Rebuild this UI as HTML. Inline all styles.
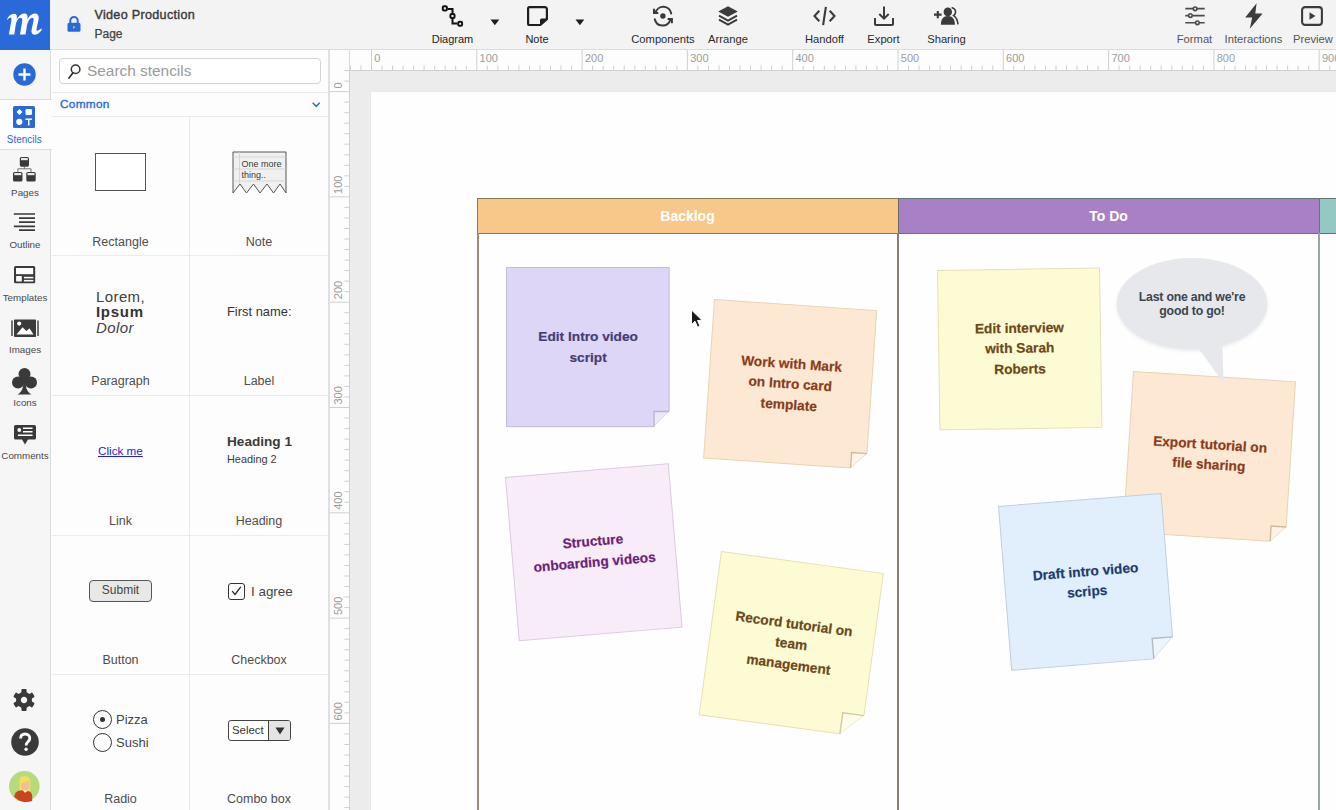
<!DOCTYPE html>
<html><head><meta charset="utf-8">
<style>
*{box-sizing:border-box}
html,body{margin:0;padding:0}
body{width:1336px;height:810px;overflow:hidden;position:relative;background:#fff;font-family:"Liberation Sans",sans-serif;color:#333}
.a{position:absolute}
.tl{position:absolute;font-size:11px;color:#2b2b2b;white-space:nowrap;top:32.5px;line-height:12px}
.ic{position:absolute;overflow:visible}
.rl{position:absolute;left:0;width:50px;text-align:center;font-size:9.8px;color:#4a4a4a;line-height:10px}
.cell{position:absolute;text-align:center;font-size:12.5px;color:#4d4d4d;line-height:14px;white-space:nowrap}
.note{position:absolute;transform-origin:50% 50%}
.note svg{position:absolute;left:0;top:0;overflow:visible}
.nt{position:absolute;left:0;top:0;width:100%;height:100%;display:flex;align-items:center;justify-content:center;text-align:center;font-weight:bold;font-size:13.7px;line-height:20px;-webkit-text-stroke:0.2px currentColor}
</style></head>
<body>
<!-- TOP BAR -->
<div class="a" style="left:0;top:0;width:1336px;height:50px;background:#f3f3f3;border-bottom:1px solid #dcdcdc"></div>
<div class="a" style="left:0;top:0;width:50px;height:50px;background:#2a69d8"></div>
<svg class="ic" style="left:0;top:0" width="50" height="50" viewBox="0 0 50 50">
<path fill="#fff" d="M7,19.5 C8.5,16 11,13.8 14,13.8 C16.5,13.8 17.3,15.5 16.8,18.5 L16.5,19.8 C18.5,15.8 21.3,13.5 24,13.5 C27,13.5 28,15.5 27.5,18.5 L27.3,19.6 C29.3,15.6 32,13.5 34.8,13.5 C38,13.5 39.2,16 38.6,19.5 L36.6,28.5 C36.2,30.5 36.8,31.2 38,30.5 C39.2,29.8 40.3,29 41.3,28.5 L41.8,29.8 C40,32.5 37.5,34.8 35,34.8 C32.3,34.8 31,33 31.6,30 L33.5,20.5 C33.9,18.5 33.3,17.8 32.2,17.8 C30,17.8 27.8,21.5 27,25.5 L25.5,34.5 H20 L22.3,20.5 C22.2,18.5 21.6,17.8 20.5,17.8 C18.3,17.8 16.3,21.3 15.6,25.5 L14.3,34.5 H8.9 L11.5,20 C11.8,18.5 11.2,17.5 10.3,17.5 C9.2,17.5 8.3,18.5 7.8,19.8 Z"/>
</svg>
<!-- lock -->
<svg class="ic" style="left:67px;top:16px" width="14" height="16" viewBox="0 0 14 16">
<path d="M3.3,7 V4.6 A3.7,3.7 0 0 1 10.7,4.6 V7" fill="none" stroke="#2a69d8" stroke-width="2"/>
<rect x="0.5" y="6.8" width="13" height="9" rx="1.6" fill="#2a69d8"/>
<path d="M6,9.8 L8.6,11.3 L6,12.8Z" fill="#8fd0a0"/>
</svg>
<div class="a" style="left:94.5px;top:8px;font-size:12.6px;letter-spacing:0.3px;color:#3a3a3a;line-height:14px;white-space:nowrap;-webkit-text-stroke:0.4px #3a3a3a">Video Production</div>
<div class="a" style="left:94.5px;top:26.5px;font-size:12px;color:#444;line-height:14px;white-space:nowrap;-webkit-text-stroke:0.25px #444">Page</div>

<!-- toolbar icons -->
<!-- Diagram -->
<svg class="ic" style="left:441px;top:5px" width="23" height="23" viewBox="0 0 23 23">
<g fill="none" stroke="#111" stroke-width="2">
<rect x="1.8" y="1.3" width="4.1" height="4.2" rx="1.3"/>
<rect x="9.4" y="9.1" width="4.2" height="3.9" rx="1.3"/>
<rect x="17.2" y="16.7" width="3.9" height="4" rx="1.3"/>
<path d="M6.9,3.9 H11.5 V8.1 M11.5,14 V18.6 H16.2"/>
</g></svg>
<svg class="ic" style="left:490px;top:19px" width="10" height="7" viewBox="0 0 10 7"><path d="M0.5,0.5 H9.3 L4.9,6.3Z" fill="#1e1e1e"/></svg>
<div class="tl" style="left:431px;width:43px;text-align:center;color:#222">Diagram</div>
<!-- Note -->
<svg class="ic" style="left:527px;top:6px" width="21" height="20" viewBox="0 0 21 20">
<path d="M2.2,1.1 H18 A1.9,1.9 0 0 1 19.9,3 V13.2 L13.3,19 H2.2 A1.1,1.1 0 0 1 1.1,17.9 V2.2 A1.1,1.1 0 0 1 2.2,1.1Z" fill="none" stroke="#1e1e1e" stroke-width="2.2" stroke-linejoin="round"/>
<path d="M19.9,12.5 H14.5 A1.5,1.5 0 0 0 13,14 V19.2Z" fill="#1e1e1e"/>
</svg>
<svg class="ic" style="left:575px;top:19px" width="10" height="7" viewBox="0 0 10 7"><path d="M0.5,0.5 H9.3 L4.9,6.3Z" fill="#1e1e1e"/></svg>
<div class="tl" style="left:520px;width:34px;text-align:center;color:#222">Note</div>
<!-- Components -->
<svg class="ic" style="left:653px;top:6px" width="21" height="21" viewBox="0 0 21 21">
<g fill="none" stroke="#3a3a3a" stroke-width="2" stroke-linecap="round">
<path d="M2.6,6.6 A8,8 0 0 1 18.2,7.5"/>
<path d="M1.8,13.2 A8,8 0 0 0 17.2,14.2"/>
<path d="M1,2.8 V7.1 H5.3" stroke-linecap="butt" stroke-linejoin="miter"/>
<path d="M14.6,13 H18.9 V17.2" stroke-linecap="butt" stroke-linejoin="miter"/>
</g>
<circle cx="9.9" cy="10" r="2.7" fill="#3a3a3a"/>
</svg>
<div class="tl" style="left:631px;width:64px;text-align:center;font-size:11.2px">Components</div>
<!-- Arrange -->
<svg class="ic" style="left:718px;top:6px" width="20" height="20" viewBox="0 0 20 20">
<path d="M10,0.3 L19.8,5.5 L10,10.8 L0.2,5.5Z" fill="#3c3c3c"/>
<path d="M1,9.6 L10,14.6 L19,9.6 M1,13.6 L10,18.6 L19,13.6" fill="none" stroke="#3c3c3c" stroke-width="2"/>
</svg>
<div class="tl" style="left:707px;width:42px;text-align:center;font-size:11.2px">Arrange</div>
<!-- Handoff -->
<svg class="ic" style="left:813px;top:6px" width="23" height="20" viewBox="0 0 23 20">
<g fill="none" stroke="#3c3c3c" stroke-width="2.1">
<path d="M6.3,4.8 L1.5,10 L6.3,15.2 M16.7,4.8 L21.5,10 L16.7,15.2 M12.9,0.8 L10.1,19.2"/>
</g></svg>
<div class="tl" style="left:804px;width:41px;text-align:center;font-size:11.2px">Handoff</div>
<!-- Export -->
<svg class="ic" style="left:874px;top:6px" width="20" height="20" viewBox="0 0 20 20">
<g fill="none" stroke="#3c3c3c" stroke-width="2">
<path d="M10,0.5 V12.5 M5.3,8 L10,12.6 L14.7,8"/>
<path d="M1,12 V18.2 A0.8,0.8 0 0 0 1.8,19 H18.2 A0.8,0.8 0 0 0 19,18.2 V12"/>
</g></svg>
<div class="tl" style="left:867px;width:33px;text-align:center;font-size:11.2px">Export</div>
<!-- Sharing -->
<svg class="ic" style="left:934px;top:7px" width="25" height="19" viewBox="0 0 25 19">
<path d="M0,7.6 H7.6 M3.8,4.1 V11.3" stroke="#3a3a3a" stroke-width="2.1" fill="none"/>
<ellipse cx="13.8" cy="4.9" rx="4.2" ry="4.3" fill="#3a3a3a"/>
<path d="M6.9,17.8 C6.9,12.3 9.3,9 13.9,9 C18.5,9 20.9,12.3 20.9,17.8 Z" fill="#3a3a3a"/>
<path d="M17.6,0.6 C20.3,1.4 21.8,3.4 21.5,5.6 C21.3,7 20.6,7.9 19.6,8.6 C22.2,10.2 23.6,13.6 24,17.4" stroke="#3a3a3a" stroke-width="1.6" fill="none"/>
</svg>
<div class="tl" style="left:927px;width:39px;text-align:center;font-size:11.2px">Sharing</div>
<!-- Format -->
<svg class="ic" style="left:1185px;top:7px" width="20" height="18" viewBox="0 0 20 18">
<g stroke="#4a4a4a" stroke-width="1.6" fill="none">
<path d="M0.3,1.6 H8.2 M12,1.6 H19.7 M0.3,8.6 H3.5 M7.3,8.6 H19.7 M0.3,15.8 H10.5 M14.3,15.8 H19.7"/>
<circle cx="10.1" cy="1.8" r="1.8"/>
<circle cx="5.4" cy="8.6" r="1.8"/>
<circle cx="12.4" cy="15.8" r="1.8"/>
</g></svg>
<div class="tl" style="left:1176px;width:37px;text-align:center;font-size:11.2px;color:#555">Format</div>
<!-- Interactions -->
<svg class="ic" style="left:1245px;top:3px" width="18" height="26" viewBox="0 0 18 26">
<path d="M11.6,0.3 L0.2,14.5 L7.2,14.5 L4.8,25.8 L17.6,10.6 L10.3,10.6 Z" fill="#3c3c3c"/>
</svg>
<div class="tl" style="left:1223px;width:61px;text-align:center;font-size:11.2px;color:#555">Interactions</div>
<!-- Preview -->
<svg class="ic" style="left:1301px;top:6px" width="22" height="20" viewBox="0 0 22 20">
<rect x="1.1" y="1.1" width="19.8" height="17.8" rx="3" fill="none" stroke="#3c3c3c" stroke-width="2.1"/>
<path d="M8.5,6.2 L14.5,10 L8.5,13.8Z" fill="#3c3c3c"/>
</svg>
<div class="tl" style="left:1292px;width:42px;text-align:center;font-size:11.2px;color:#555">Preview</div>
<!-- LEFT RAIL -->
<div class="a" style="left:0;top:50px;width:51px;height:760px;background:#f6f6f6;border-right:1px solid #d9d9d9"></div>
<div class="a" style="left:0;top:99px;width:52px;height:51px;background:#fdfdfd;border-top:1px solid #dddddd;border-bottom:1px solid #dddddd"></div>
<svg class="ic" style="left:13px;top:63px" width="23" height="23" viewBox="0 0 23 23">
<circle cx="11.5" cy="11.5" r="11.2" fill="#2a69d8"/>
<path d="M11.5,5.5 V17.5 M5.5,11.5 H17.5" stroke="#fff" stroke-width="2.4"/>
</svg>
<!-- stencils icon -->
<svg class="ic" style="left:13px;top:105.5px" width="22" height="22" viewBox="0 0 22 22">
<rect x="0" y="0" width="22" height="22" rx="1.5" fill="#2a69d8"/>
<path d="M6.5,3 L9.5,6 L6.5,9 L3.5,6Z" fill="#fff"/>
<rect x="12.5" y="3" width="6.5" height="6" rx="1.3" fill="#fff"/>
<circle cx="6.3" cy="15.8" r="3.1" fill="#fff"/>
<path d="M12.5,12.5 H19 V14 H16.5 V19.5 H15 V14 H12.5Z" fill="#fff"/>
</svg>
<div class="rl" style="top:135px;left:-0.7px;color:#2a69d8;font-size:10px">Stencils</div>
<!-- pages icon -->
<svg class="ic" style="left:13px;top:157px" width="23" height="25" viewBox="0 0 23 25">
<g fill="#3a3a3a">
<rect x="6.8" y="0" width="9.2" height="9.7" rx="1.6"/>
<rect x="0" y="15" width="9.5" height="9.6" rx="1.6"/>
<rect x="13.3" y="15" width="9.4" height="9.6" rx="1.6"/>
</g>
<g fill="#e8e8e8"><rect x="8" y="1" width="6.8" height="2.2"/><rect x="1.2" y="16" width="7.1" height="2.2"/><rect x="14.5" y="16" width="7" height="2.2"/></g>
<path d="M11.4,9.7 V11.8 M4.9,15 V11.8 H18 V15" fill="none" stroke="#666" stroke-width="0.9"/>
</svg>
<div class="rl" style="top:188px">Pages</div>
<!-- outline icon -->
<svg class="ic" style="left:13px;top:212px" width="23" height="20" viewBox="0 0 23 20">
<g stroke="#3a3a3a" stroke-width="1.7">
<path d="M0.8,2 H22 M6,6.1 H22 M6,10.1 H22 M0.8,14.3 H22 M6,18.2 H22"/>
</g></svg>
<div class="rl" style="top:240px">Outline</div>
<!-- templates icon -->
<svg class="ic" style="left:13.8px;top:266.4px" width="21.2" height="17.3" viewBox="0 0 21.2 17.3">
<rect x="0" y="0" width="21.2" height="17.3" rx="1.5" fill="#3a3a3a"/>
<rect x="2" y="2" width="17.2" height="6.2" fill="#fafafa"/>
<rect x="2.1" y="10" width="5.7" height="5.6" rx="0.6" fill="#fafafa"/>
<rect x="9.9" y="10.8" width="9.5" height="1.6" fill="#fafafa"/>
<rect x="9.9" y="13.9" width="9.5" height="1.6" fill="#fafafa"/>
</svg>
<div class="rl" style="top:293px">Templates</div>
<!-- images icon -->
<svg class="ic" style="left:11px;top:319px" width="28" height="19" viewBox="0 0 28 19">
<path d="M1,1.5 V17 M27,1.5 V17" stroke="#3a3a3a" stroke-width="1.4"/>
<rect x="3" y="0.5" width="22" height="17.5" rx="0.8" fill="#3a3a3a"/>
<path d="M5.5,15.5 L11.5,8.2 L15.5,12 L18.5,9.2 L22.5,15.5Z" fill="#fff"/>
<circle cx="8.2" cy="4.6" r="2.1" fill="#fff"/>
</svg>
<div class="rl" style="top:345px">Images</div>
<!-- icons (club) -->
<svg class="ic" style="left:11.5px;top:367.5px" width="25" height="27" viewBox="0 0 25 27">
<g fill="#3a3a3a">
<circle cx="12.5" cy="6" r="6"/>
<circle cx="6" cy="14.5" r="6"/>
<circle cx="19" cy="14.5" r="6"/>
<path d="M10.5,8 H14.5 L13.8,17 C14.3,22 16.5,25 19.5,26.5 H5.5 C8.5,25 10.7,22 11.2,17Z"/>
</g></svg>
<div class="rl" style="top:398px">Icons</div>
<!-- comments icon -->
<svg class="ic" style="left:13.5px;top:425px" width="22" height="20" viewBox="0 0 22 20">
<path d="M1.5,0 H20.5 A1.5,1.5 0 0 1 22,1.5 V13 A1.5,1.5 0 0 1 20.5,14.5 H14 L11,19.5 L8,14.5 H1.5 A1.5,1.5 0 0 1 0,13 V1.5 A1.5,1.5 0 0 1 1.5,0Z" fill="#3a3a3a"/>
<circle cx="5.3" cy="5" r="1.9" fill="#fff"/>
<path d="M9,3.3 H18.5 M9,6.8 H18.5 M4,10.3 H18.5" stroke="#fff" stroke-width="1.5"/>
</svg>
<div class="rl" style="top:451px">Comments</div>
<!-- gear -->
<svg class="ic" style="left:13.3px;top:688.8px" width="22" height="22" viewBox="-11 -11 22 22">
<g fill="#3a3a3a"><rect x="-2.6" y="-10.9" width="5.2" height="5" rx="0.8" transform="rotate(0)"/><rect x="-2.6" y="-10.9" width="5.2" height="5" rx="0.8" transform="rotate(60)"/><rect x="-2.6" y="-10.9" width="5.2" height="5" rx="0.8" transform="rotate(120)"/><rect x="-2.6" y="-10.9" width="5.2" height="5" rx="0.8" transform="rotate(180)"/><rect x="-2.6" y="-10.9" width="5.2" height="5" rx="0.8" transform="rotate(240)"/><rect x="-2.6" y="-10.9" width="5.2" height="5" rx="0.8" transform="rotate(300)"/></g>
<circle r="5.6" fill="none" stroke="#3a3a3a" stroke-width="4.8"/>
</svg>
<!-- help -->
<svg class="ic" style="left:10.5px;top:728px" width="28" height="28" viewBox="0 0 28 28">
<circle cx="14" cy="14" r="13.8" fill="#3a3a3a"/>
<path d="M9.6,10.6 C9.6,7.6 11.6,6 14.2,6 C17,6 18.8,7.8 18.8,10.2 C18.8,13.6 15.2,13.8 15.2,17 V17.6" fill="none" stroke="#fff" stroke-width="2.8"/>
<circle cx="15.1" cy="21.3" r="1.7" fill="#fff"/>
</svg>
<!-- avatar -->
<svg class="ic" style="left:8.9px;top:770.5px" width="31" height="31" viewBox="0 0 31 31">
<circle cx="15.3" cy="15.3" r="15.3" fill="#b5db7c"/>
<path d="M10.5,10 C10.5,6.5 12.5,5.3 15.8,5.3 C19.5,5.3 21.2,7.5 21.2,11 L21.2,23 L10.3,23Z" fill="#f5df55"/>
<path d="M12,12.5 C13.5,12 17,10.8 19.8,9.5 C20.3,11 20.3,13 20.2,15.5 C20,18 18.5,19.5 16.3,19.5 C13.8,19.5 12.1,17.8 12,15Z" fill="#f1bf94"/>
<path d="M6.5,22 C8,20 11,19.3 14,19.3 L16,21.5 L19,20 C21.5,20.5 23,22 23.2,25 L23.2,30 C20.5,31 17.5,31.3 15,31 C11,30.5 7.5,28.5 5,25.5Z" fill="#c9441f"/>
<path d="M13.8,19.3 L16,21.8 L17.5,20.2 L17,19.5Z" fill="#fff"/>
</svg>
<!-- STENCIL PANEL -->
<div class="a" style="left:52px;top:50px;width:276px;height:760px;background:#fdfdfd"></div>
<div class="a" style="left:328px;top:50px;width:2px;height:760px;background:#e0e0e0"></div>
<div class="a" style="left:59px;top:58px;width:262px;height:26px;border:1px solid #d4d4d4;border-radius:4px;background:#fff"></div>
<svg class="ic" style="left:68px;top:63.5px" width="13" height="15" viewBox="0 0 13 15">
<circle cx="7.6" cy="5.3" r="4.3" fill="none" stroke="#333" stroke-width="1.5"/>
<path d="M5,8.8 L1,14" stroke="#333" stroke-width="1.8" stroke-linecap="round"/>
</svg>
<div class="a" style="left:87px;top:62px;font-size:15.4px;line-height:18px;color:#9a9a9a;white-space:nowrap">Search stencils</div>
<div class="a" style="left:52px;top:92px;width:276px;height:1px;background:#ebebeb"></div>
<div class="a" style="left:60px;top:97px;font-size:11.8px;letter-spacing:0.3px;line-height:14px;color:#2a69d8;white-space:nowrap;-webkit-text-stroke:0.35px #2a69d8">Common</div>
<svg class="ic" style="left:312px;top:102px" width="9" height="6" viewBox="0 0 9 6"><path d="M0.7,0.7 L4.2,4.3 L7.7,0.7" fill="none" stroke="#2a69d8" stroke-width="1.5"/></svg>
<div class="a" style="left:52px;top:116px;width:276px;height:1px;background:#ebebeb"></div>
<!-- grid lines -->
<div class="a" style="left:189px;top:116px;width:1px;height:694px;background:#ebebef"></div>
<div class="a" style="left:52px;top:255px;width:276px;height:1px;background:#ebebef"></div>
<div class="a" style="left:52px;top:394.5px;width:276px;height:1px;background:#ebebef"></div>
<div class="a" style="left:52px;top:534.5px;width:276px;height:1px;background:#ebebef"></div>
<div class="a" style="left:52px;top:674px;width:276px;height:1px;background:#ebebef"></div>
<!-- row1 -->
<div class="a" style="left:95px;top:153px;width:51px;height:38px;border:1.6px solid #555;background:#fff"></div>
<div class="cell" style="left:52px;width:137px;top:234.5px">Rectangle</div>
<svg class="ic" style="left:232px;top:150.5px" width="55" height="44" viewBox="0 0 55 44">
<path d="M1,1 H54 V42 L48,33 L41.5,42 L35,33 L28,42 L21.5,33 L14.5,42 L8,33 L1,42Z" fill="#f0f0f0" stroke="#555" stroke-width="1"/>
<path d="M1,6 H54 M1,18 H54 M1,30 H54 M7.5,1 V33" stroke="#cfcfcf" stroke-width="0.8" fill="none"/>
<text x="9.5" y="16" font-family="Liberation Sans" font-size="9" fill="#3a3a3a">One more</text>
<text x="9.5" y="26.5" font-family="Liberation Sans" font-size="9" fill="#3a3a3a">thing..</text>
</svg>
<div class="cell" style="left:190px;width:138px;top:234.5px">Note</div>
<!-- row2 -->
<div class="a" style="left:96px;top:289px;font-size:15px;line-height:15.4px;color:#404040;white-space:nowrap;letter-spacing:0.4px">Lorem,<br><b style="letter-spacing:0.7px;color:#333">Ipsum</b><br><i>Dolor</i></div>
<div class="cell" style="left:52px;width:137px;top:373.8px">Paragraph</div>
<div class="a" style="left:227px;top:304px;font-size:12.9px;line-height:16px;color:#333;white-space:nowrap">First name:</div>
<div class="cell" style="left:190px;width:138px;top:373.8px">Label</div>
<!-- row3 -->
<div class="a" style="left:98px;top:444px;font-size:11.7px;line-height:14px;color:#2222dd;white-space:nowrap;text-decoration:underline">Click me</div>
<div class="cell" style="left:52px;width:137px;top:513.5px">Link</div>
<div class="a" style="left:227px;top:434px;font-size:13.6px;font-weight:bold;line-height:16px;color:#3a3a3a;white-space:nowrap">Heading 1</div>
<div class="a" style="left:227px;top:453px;font-size:10.9px;line-height:13px;color:#3a3a3a;white-space:nowrap">Heading 2</div>
<div class="cell" style="left:190px;width:138px;top:513.5px">Heading</div>
<!-- row4 -->
<div class="a" style="left:89px;top:580px;width:63px;height:22px;border:1.4px solid #555;border-radius:4px;background:#e8e8e8;font-size:12px;line-height:19px;text-align:center;color:#444">Submit</div>
<div class="cell" style="left:52px;width:137px;top:652.8px">Button</div>
<div class="a" style="left:228px;top:582.5px;width:17px;height:17px;border:1.4px solid #333;border-radius:3px;background:#fff"></div>
<svg class="ic" style="left:230px;top:585px" width="13" height="12" viewBox="0 0 13 12"><path d="M2.2,6.2 L5,9.5 L10.8,1.8" fill="none" stroke="#222" stroke-width="1.3"/></svg>
<div class="a" style="left:251px;top:584px;font-size:13.4px;line-height:16px;color:#444;white-space:nowrap">I agree</div>
<div class="cell" style="left:190px;width:138px;top:652.8px">Checkbox</div>
<!-- row5 -->
<div class="a" style="left:92.5px;top:709.5px;width:19px;height:19px;border:1.4px solid #333;border-radius:50%;background:#fff"></div>
<div class="a" style="left:99.5px;top:716.5px;width:5px;height:5px;border-radius:50%;background:#333"></div>
<div class="a" style="left:92.5px;top:733px;width:19px;height:19px;border:1.4px solid #333;border-radius:50%;background:#fff"></div>
<div class="a" style="left:116px;top:711.5px;font-size:13px;line-height:16px;color:#444;white-space:nowrap">Pizza</div>
<div class="a" style="left:116px;top:735px;font-size:13px;line-height:16px;color:#444;white-space:nowrap">Sushi</div>
<div class="cell" style="left:52px;width:137px;top:791.8px">Radio</div>
<div class="a" style="left:228px;top:720px;width:63px;height:21px;border:1.3px solid #444;border-radius:3px;background:#fff"></div>
<div class="a" style="left:268px;top:721px;width:22px;height:19px;background:#e4e4e4;border-left:1.3px solid #444;border-radius:0 2px 2px 0"></div>
<svg class="ic" style="left:274.5px;top:726.5px" width="10" height="8" viewBox="0 0 10 8"><path d="M0.5,0.5 H9.5 L5,7.5Z" fill="#333"/></svg>
<div class="a" style="left:232px;top:723px;font-size:11.4px;line-height:14px;color:#333;white-space:nowrap">Select</div>
<div class="cell" style="left:190px;width:138px;top:791.8px">Combo box</div>
<!-- CANVAS -->
<div class="a" style="left:350px;top:71px;width:986px;height:739px;background:#ececec"></div>
<div class="a" style="left:371px;top:91.5px;width:965px;height:718.5px;background:#fefefe;box-shadow:0 0 1px #d8d8d8"></div>
<div class="a" style="left:477px;top:197.5px;width:421px;height:36px;background:#f7c889;border:1.5px solid #8b7856;border-right:none"></div>
<div class="a" style="left:898px;top:197.5px;width:421px;height:36px;background:#a880c6;border:1.5px solid #5f7777;border-left:1.5px solid #6b6b5a;border-right:none"></div>
<div class="a" style="left:1319px;top:197.5px;width:17px;height:36px;background:#93c8c3;border:1.5px solid #5f7777;border-right:none"></div>
<div class="a" style="left:477px;top:233px;width:1.5px;height:577px;background:#9a8c78"></div>
<div class="a" style="left:897.3px;top:233px;width:1.5px;height:577px;background:#8d7f6d"></div>
<div class="a" style="left:1318.3px;top:233px;width:1.5px;height:577px;background:#93a8a8"></div>
<div class="a" style="left:477px;top:197.5px;width:421px;height:36px;line-height:37px;text-align:center;color:#fff;font-weight:bold;font-size:14px">Backlog</div>
<div class="a" style="left:898px;top:197.5px;width:421px;height:36px;line-height:37px;text-align:center;color:#fff;font-weight:bold;font-size:14px">To Do</div>
<div class="note" style="left:506.3px;top:267.2px;width:163.7px;height:160.2px;transform-origin:0 0;transform:rotate(0deg)"><svg width="163.7" height="160.2" viewBox="0 0 163.7 160.2"><path d="M0.5,0.5 H163.2 V143.89999999999998 L147.39999999999998,159.7 H0.5Z" fill="#ddd6f6" stroke="#c3bcd8" stroke-width="1"/><path d="M147.39999999999998,143.89999999999998 H163.2 L147.39999999999998,159.7Z" fill="#ece8f8"/><path d="M147.99999999999997,159.7 V144.49999999999997 H163.2" stroke="#b9b5c6" stroke-width="1.4" fill="none"/></svg><div class="nt" style="color:#463c74;line-height:20.5px;font-size:13.7px;letter-spacing:0px;top:0.5px"><div>Edit Intro video<br>script</div></div></div>
<div class="note" style="left:713.9px;top:298.6px;width:163.6px;height:159.8px;transform-origin:0 0;transform:rotate(3.9deg)"><svg width="163.6" height="159.8" viewBox="0 0 163.6 159.8"><path d="M0.5,0.5 H163.1 V143.3 L147.1,159.3 H0.5Z" fill="#fde9d3" stroke="#e8d2b8" stroke-width="1"/><path d="M147.1,143.3 H163.1 L147.1,159.3Z" fill="#fcf4ea"/><path d="M147.7,159.3 V143.9 H163.1" stroke="#cdbb9c" stroke-width="1.4" fill="none"/></svg><div class="nt" style="color:#8a3b1c;line-height:20.5px;font-size:13.7px;letter-spacing:0px;top:0.5px"><div>Work with Mark<br>on Intro card<br>template</div></div></div>
<div class="note" style="left:505.0px;top:477.2px;width:164.3px;height:164.9px;transform-origin:0 0;transform:rotate(-4.8deg)"><svg width="164.3" height="164.9" viewBox="0 0 164.3 164.9"><rect x="0.5" y="0.5" width="163.3" height="163.9" fill="#f9ecf9" stroke="#dcc8e0" stroke-width="1"/></svg><div class="nt" style="color:#6c2178;line-height:20.5px;font-size:13.7px;letter-spacing:0px;top:0.5px"><div>Structure<br>onboarding videos</div></div></div>
<div class="note" style="left:720.9px;top:551.1px;width:164.4px;height:165.7px;transform-origin:0 0;transform:rotate(7.76deg)"><svg width="164.4" height="165.7" viewBox="0 0 164.4 165.7"><path d="M0.5,0.5 H163.9 V143.2 L141.9,165.2 H0.5Z" fill="#fdfbd3" stroke="#e6e0b4" stroke-width="1"/><path d="M141.9,143.2 H163.9 L141.9,165.2Z" fill="#fdfce8"/><path d="M142.5,165.2 V143.79999999999998 H163.9" stroke="#d0c9a2" stroke-width="1.4" fill="none"/></svg><div class="nt" style="color:#6b4819;line-height:20.5px;font-size:13.7px;letter-spacing:0px;top:0.5px"><div>Record tutorial on<br>team<br>management</div></div></div>
<div class="note" style="left:936.8px;top:269.8px;width:163px;height:160.4px;transform-origin:0 0;transform:rotate(-0.88deg)"><svg width="163" height="160.4" viewBox="0 0 163 160.4"><rect x="0.5" y="0.5" width="162" height="159.4" fill="#fdfbd3" stroke="#e6e0b4" stroke-width="1"/></svg><div class="nt" style="color:#6b4819;line-height:20.5px;font-size:13.7px;letter-spacing:0px;top:0.5px"><div>Edit interview<br>with Sarah<br>Roberts</div></div></div>
<svg class="ic" style="left:1100px;top:250px" width="180" height="140" viewBox="1100 250 180 140"><defs><filter id="sh" x="-20%" y="-20%" width="140%" height="140%"><feGaussianBlur stdDeviation="1.5"/></filter></defs><g opacity="0.35" filter="url(#sh)" transform="translate(0,2)"><ellipse cx="1192" cy="303.7" rx="75.4" ry="45.6" fill="#c8ccd0"/></g><ellipse cx="1192" cy="303.7" rx="75.4" ry="45.6" fill="#e6e8eb"/></svg>
<div class="note" style="left:1132.6px;top:371.1px;width:163.3px;height:161.6px;transform-origin:0 0;transform:rotate(3.65deg)"><svg width="163.3" height="161.6" viewBox="0 0 163.3 161.6"><path d="M0.5,0.5 H162.8 V145.4 L147.10000000000002,161.1 H0.5Z" fill="#fde9d3" stroke="#e8d2b8" stroke-width="1"/><path d="M147.10000000000002,145.4 H162.8 L147.10000000000002,161.1Z" fill="#fcf4ea"/><path d="M147.70000000000002,161.1 V146.0 H162.8" stroke="#cdbb9c" stroke-width="1.4" fill="none"/></svg><div class="nt" style="color:#8a3b1c;line-height:20.5px;font-size:13.7px;letter-spacing:0px;top:-1.5px"><div>Export tutorial on<br>file sharing</div></div></div>
<svg class="ic" style="left:1190px;top:330px" width="40" height="55" viewBox="1190 330 40 55"><path d="M1195.5,345 Q1206,358 1223.6,383.5 L1222.2,336 Z" fill="#e6e8eb"/></svg>
<div class="a" style="left:1117px;top:290px;width:150px;text-align:center;font-weight:bold;font-size:12.3px;line-height:14px;color:#3c4550;letter-spacing:-0.2px">Last one and we're<br>good to go!</div>
<div class="note" style="left:998.1px;top:505.9px;width:164px;height:165.3px;transform-origin:0 0;transform:rotate(-4.58deg)"><svg width="164" height="165.3" viewBox="0 0 164 165.3"><path d="M0.5,0.5 H163.5 V143.8 L142.5,164.8 H0.5Z" fill="#e1effc" stroke="#bccfe0" stroke-width="1"/><path d="M142.5,143.8 H163.5 L142.5,164.8Z" fill="#eef6fd"/><path d="M143.1,164.8 V144.4 H163.5" stroke="#b3bac2" stroke-width="1.4" fill="none"/></svg><div class="nt" style="color:#1e3a6e;line-height:20.5px;font-size:13.7px;letter-spacing:0px;top:0.5px"><div>Draft intro video<br>scrips</div></div></div>
<svg class="ic" style="left:690px;top:309px" width="14" height="20" viewBox="0 0 14 20"><path d="M1.5,1 L1.5,15.5 L5,12.3 L7.6,18.2 L10,17.1 L7.5,11.5 L12,11.3Z" fill="#1a1a1a" stroke="#fff" stroke-width="1"/></svg><svg class="ic" style="left:330px;top:50px" width="1006" height="21" viewBox="330 50 1006 21"><rect x="330" y="50" width="1006" height="20.5" fill="#fdfdfd"/><path d="M330,70.5 H1336" stroke="#d0d0d0" stroke-width="1"/><path d="M349.5,50 V70.5" stroke="#d8d8d8" stroke-width="1"/><path d="M350.4,65.3 V70.5 M361.0,65.3 V70.5 M371.5,50 V70.5 M382.0,65.3 V70.5 M392.6,65.3 V70.5 M403.1,65.3 V70.5 M413.6,65.3 V70.5 M424.1,65.3 V70.5 M434.7,65.3 V70.5 M445.2,65.3 V70.5 M455.7,65.3 V70.5 M466.3,65.3 V70.5 M476.8,50 V70.5 M487.3,65.3 V70.5 M497.9,65.3 V70.5 M508.4,65.3 V70.5 M518.9,65.3 V70.5 M529.5,65.3 V70.5 M540.0,65.3 V70.5 M550.5,65.3 V70.5 M561.0,65.3 V70.5 M571.6,65.3 V70.5 M582.1,50 V70.5 M592.6,65.3 V70.5 M603.2,65.3 V70.5 M613.7,65.3 V70.5 M624.2,65.3 V70.5 M634.8,65.3 V70.5 M645.3,65.3 V70.5 M655.8,65.3 V70.5 M666.3,65.3 V70.5 M676.9,65.3 V70.5 M687.4,50 V70.5 M697.9,65.3 V70.5 M708.5,65.3 V70.5 M719.0,65.3 V70.5 M729.5,65.3 V70.5 M740.0,65.3 V70.5 M750.6,65.3 V70.5 M761.1,65.3 V70.5 M771.6,65.3 V70.5 M782.2,65.3 V70.5 M792.7,50 V70.5 M803.2,65.3 V70.5 M813.8,65.3 V70.5 M824.3,65.3 V70.5 M834.8,65.3 V70.5 M845.4,65.3 V70.5 M855.9,65.3 V70.5 M866.4,65.3 V70.5 M876.9,65.3 V70.5 M887.5,65.3 V70.5 M898.0,50 V70.5 M908.5,65.3 V70.5 M919.1,65.3 V70.5 M929.6,65.3 V70.5 M940.1,65.3 V70.5 M950.6,65.3 V70.5 M961.2,65.3 V70.5 M971.7,65.3 V70.5 M982.2,65.3 V70.5 M992.8,65.3 V70.5 M1003.3,50 V70.5 M1013.8,65.3 V70.5 M1024.4,65.3 V70.5 M1034.9,65.3 V70.5 M1045.4,65.3 V70.5 M1056.0,65.3 V70.5 M1066.5,65.3 V70.5 M1077.0,65.3 V70.5 M1087.5,65.3 V70.5 M1098.1,65.3 V70.5 M1108.6,50 V70.5 M1119.1,65.3 V70.5 M1129.7,65.3 V70.5 M1140.2,65.3 V70.5 M1150.7,65.3 V70.5 M1161.2,65.3 V70.5 M1171.8,65.3 V70.5 M1182.3,65.3 V70.5 M1192.8,65.3 V70.5 M1203.4,65.3 V70.5 M1213.9,50 V70.5 M1224.4,65.3 V70.5 M1235.0,65.3 V70.5 M1245.5,65.3 V70.5 M1256.0,65.3 V70.5 M1266.5,65.3 V70.5 M1277.1,65.3 V70.5 M1287.6,65.3 V70.5 M1298.1,65.3 V70.5 M1308.7,65.3 V70.5 M1319.2,50 V70.5 M1329.7,65.3 V70.5" stroke="#cfcfcf" stroke-width="1" fill="none"/><text x="374.3" y="62" font-family="Liberation Sans" font-size="11" fill="#9c9c9c">0</text><text x="479.6" y="62" font-family="Liberation Sans" font-size="11" fill="#9c9c9c">100</text><text x="584.9" y="62" font-family="Liberation Sans" font-size="11" fill="#9c9c9c">200</text><text x="690.2" y="62" font-family="Liberation Sans" font-size="11" fill="#9c9c9c">300</text><text x="795.5" y="62" font-family="Liberation Sans" font-size="11" fill="#9c9c9c">400</text><text x="900.8" y="62" font-family="Liberation Sans" font-size="11" fill="#9c9c9c">500</text><text x="1006.1" y="62" font-family="Liberation Sans" font-size="11" fill="#9c9c9c">600</text><text x="1111.4" y="62" font-family="Liberation Sans" font-size="11" fill="#9c9c9c">700</text><text x="1216.7" y="62" font-family="Liberation Sans" font-size="11" fill="#9c9c9c">800</text><text x="1322.0" y="62" font-family="Liberation Sans" font-size="11" fill="#9c9c9c">900</text></svg>
<svg class="ic" style="left:330px;top:70px" width="20" height="740" viewBox="330 70 20 740"><rect x="330" y="70" width="19.5" height="740" fill="#fdfdfd"/><path d="M349.5,70 V810" stroke="#d0d0d0" stroke-width="1"/><path d="M344.3,70.5 H349.5 M344.3,81.1 H349.5 M330,91.6 H349.5 M344.3,102.1 H349.5 M344.3,112.7 H349.5 M344.3,123.2 H349.5 M344.3,133.7 H349.5 M344.3,144.2 H349.5 M344.3,154.8 H349.5 M344.3,165.3 H349.5 M344.3,175.8 H349.5 M344.3,186.4 H349.5 M330,196.9 H349.5 M344.3,207.4 H349.5 M344.3,218.0 H349.5 M344.3,228.5 H349.5 M344.3,239.0 H349.5 M344.3,249.5 H349.5 M344.3,260.1 H349.5 M344.3,270.6 H349.5 M344.3,281.1 H349.5 M344.3,291.7 H349.5 M330,302.2 H349.5 M344.3,312.7 H349.5 M344.3,323.3 H349.5 M344.3,333.8 H349.5 M344.3,344.3 H349.5 M344.3,354.9 H349.5 M344.3,365.4 H349.5 M344.3,375.9 H349.5 M344.3,386.4 H349.5 M344.3,397.0 H349.5 M330,407.5 H349.5 M344.3,418.0 H349.5 M344.3,428.6 H349.5 M344.3,439.1 H349.5 M344.3,449.6 H349.5 M344.3,460.1 H349.5 M344.3,470.7 H349.5 M344.3,481.2 H349.5 M344.3,491.7 H349.5 M344.3,502.3 H349.5 M330,512.8 H349.5 M344.3,523.3 H349.5 M344.3,533.9 H349.5 M344.3,544.4 H349.5 M344.3,554.9 H349.5 M344.3,565.5 H349.5 M344.3,576.0 H349.5 M344.3,586.5 H349.5 M344.3,597.0 H349.5 M344.3,607.6 H349.5 M330,618.1 H349.5 M344.3,628.6 H349.5 M344.3,639.2 H349.5 M344.3,649.7 H349.5 M344.3,660.2 H349.5 M344.3,670.8 H349.5 M344.3,681.3 H349.5 M344.3,691.8 H349.5 M344.3,702.3 H349.5 M344.3,712.9 H349.5 M330,723.4 H349.5 M344.3,733.9 H349.5 M344.3,744.5 H349.5 M344.3,755.0 H349.5 M344.3,765.5 H349.5 M344.3,776.1 H349.5 M344.3,786.6 H349.5 M344.3,797.1 H349.5 M344.3,807.6 H349.5" stroke="#cfcfcf" stroke-width="1" fill="none"/><text transform="translate(341.5,88.6) rotate(-90)" font-family="Liberation Sans" font-size="11" fill="#9c9c9c">0</text><text transform="translate(341.5,193.9) rotate(-90)" font-family="Liberation Sans" font-size="11" fill="#9c9c9c">100</text><text transform="translate(341.5,299.2) rotate(-90)" font-family="Liberation Sans" font-size="11" fill="#9c9c9c">200</text><text transform="translate(341.5,404.5) rotate(-90)" font-family="Liberation Sans" font-size="11" fill="#9c9c9c">300</text><text transform="translate(341.5,509.8) rotate(-90)" font-family="Liberation Sans" font-size="11" fill="#9c9c9c">400</text><text transform="translate(341.5,615.1) rotate(-90)" font-family="Liberation Sans" font-size="11" fill="#9c9c9c">500</text><text transform="translate(341.5,720.4) rotate(-90)" font-family="Liberation Sans" font-size="11" fill="#9c9c9c">600</text></svg></body></html>
